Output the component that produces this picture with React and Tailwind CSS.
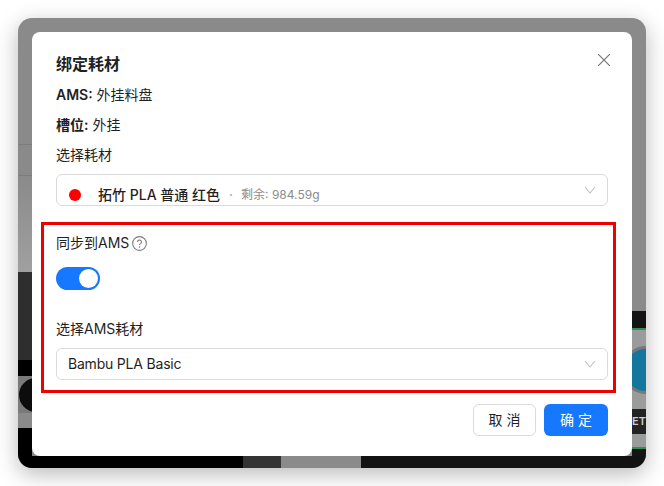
const fontStack = "font-['Inter','Noto_Sans_CJK_SC',sans-serif]";

function Chevron() {
  return (
    <svg width="12" height="8" viewBox="0 0 12 8" fill="none" stroke="#bfbfbf" strokeWidth="1.1" className="shrink-0">
      <path d="M1 1l5 6 5-6" />
    </svg>
  );
}

function SelectBox({ children }) {
  return (
    <div className="flex h-8 items-center justify-between rounded-md border border-[#d9d9d9] bg-white pl-[11px] pr-[11px]">
      {children}
      <Chevron />
    </div>
  );
}

function LeftStrip() {
  return (
    <div className="flex w-[14px] flex-col overflow-hidden">
      <div className="h-[127px] shrink-0 border-b border-[#7c7c7c]" />
      <div className="h-[31px] shrink-0 border-b border-[#7c7c7c]" />
      <div className="h-[96px] shrink-0 bg-gradient-to-b from-[#8a8a8a] to-[#a0a0a0]" />
      <div className="h-[88px] shrink-0 bg-[#2e2e2e]" />
      <div className="h-[16px] shrink-0 bg-black" />
      <div className="flex h-[37px] shrink-0 items-center bg-[#7a7a7a]">
        <div className="ml-[1px] h-[34px] w-[34px] shrink-0 rounded-full bg-[#0c0c0c]" />
      </div>
      <div className="h-[15px] shrink-0 bg-[#8a8a8a]" />
      <div className="flex-1 bg-black" />
    </div>
  );
}

function RightStrip() {
  return (
    <div className="flex w-[14px] flex-col overflow-hidden">
      <div className="h-[293px] shrink-0" />
      <div className="h-[17px] shrink-0 bg-[#141414]" />
      <div className="h-[2px] shrink-0 bg-[#2f8f55]" />
      <div className="flex h-[79px] shrink-0 items-center bg-[#9a9c9c]">
        <div className="h-[48px] w-[48px] shrink-0 -translate-x-[10px] rounded-full border-[3px] border-[#77787a] bg-[#14769c]" />
      </div>
      <div className="flex h-[25px] shrink-0 items-center justify-end bg-[#232323] text-[11px] font-semibold text-[#cfcfcf]">
        ET
      </div>
      <div className="h-[13px] shrink-0 bg-[#9a9c9c]" />
      <div className="h-[2px] shrink-0 bg-[#2f8f55]" />
      <div className="flex-1 bg-[#141414]" />
    </div>
  );
}

export default function App() {
  return (
    <div className={`h-[486px] w-[664px] bg-white p-[18px] ${fontStack}`}>
      <div className="relative flex h-[450px] w-[628px] flex-col overflow-hidden rounded-[14px] bg-[#8a8a8a] shadow-[0_6px_22px_rgba(0,0,0,0.28)]">
        <div className="flex h-[438px] justify-between">
          <LeftStrip />
          <RightStrip />
        </div>
        <div className="flex flex-1">
          <div className="w-[225px] bg-black" />
          <div className="w-[38px] bg-[#333333]" />
          <div className="w-[80px] bg-[#8a8a8a]" />
          <div className="flex-1 bg-[#121212]" />
        </div>

        <div className="absolute left-[14px] top-[14px] h-[424px] w-[600px] rounded-lg bg-white px-6 pt-5 text-sm leading-[22px] text-[#1f1f1f]">
          <div className="flex items-start justify-between">
            <h2 className="text-base font-semibold leading-6">绑定耗材</h2>
            <svg width="12" height="12" viewBox="0 0 12 12" stroke="#777777" strokeWidth="1.2" className="-mr-[2px] mt-[2px]">
              <path d="M0 0l12 12M12 0L0 12" />
            </svg>
          </div>
          <p className="mt-2"><span className="font-semibold">AMS:</span> 外挂料盘</p>
          <p className="mt-2"><span className="font-semibold">槽位:</span> 外挂</p>
          <p className="mt-2">选择耗材</p>
          <div className="mt-2">
            <SelectBox>
              <div className="ml-[1px] flex items-center pt-[10px]">
                <span className="h-3 w-3 rounded-full bg-[#ff0000]" />
                <span className="ml-[17px] font-medium">拓竹 PLA 普通 红色</span>
                <span className="ml-[9px] text-[#999999]">·</span>
                <span className="ml-[8px] text-xs text-[#8c8c8c]">剩余: 984.59g</span>
              </div>
            </SelectBox>
          </div>

          <div className="-ml-[15px] -mr-2 mt-4 border-[3px] border-[#ee0000] pb-[10px] pl-3 pr-[5px] pt-[7px]">
            <div className="flex items-center gap-[3px]">
              <span>同步到AMS</span>
              <svg width="15" height="15" viewBox="0 0 14 14" fill="none">
                <circle cx="7" cy="7" r="6.4" stroke="#7a7a7a" strokeWidth="1" />
                <path d="M5.2 5.5a1.8 1.8 0 1 1 2.7 1.6c-.6.3-.9.7-.9 1.3" stroke="#7a7a7a" strokeWidth="1" />
                <circle cx="7" cy="10.2" r=".7" fill="#7a7a7a" />
              </svg>
            </div>
            <div className="mt-[13px] flex h-[23px] w-11 items-center justify-end rounded-full bg-[#1677ff] pr-[2px]">
              <span className="h-[19px] w-[19px] rounded-full bg-white" />
            </div>
            <p className="mt-7">选择AMS耗材</p>
            <div className="mt-2">
              <SelectBox>
                <span className="tracking-[-0.2px]">Bambu PLA Basic</span>
              </SelectBox>
            </div>
          </div>

          <div className="mt-[11px] flex justify-end gap-2">
            <button className="h-8 w-[63px] rounded-md border border-[#d9d9d9] bg-white text-sm">取 消</button>
            <button className="h-8 w-[64px] rounded-md bg-[#1677ff] text-sm text-white">确 定</button>
          </div>
        </div>
      </div>
    </div>
  );
}
